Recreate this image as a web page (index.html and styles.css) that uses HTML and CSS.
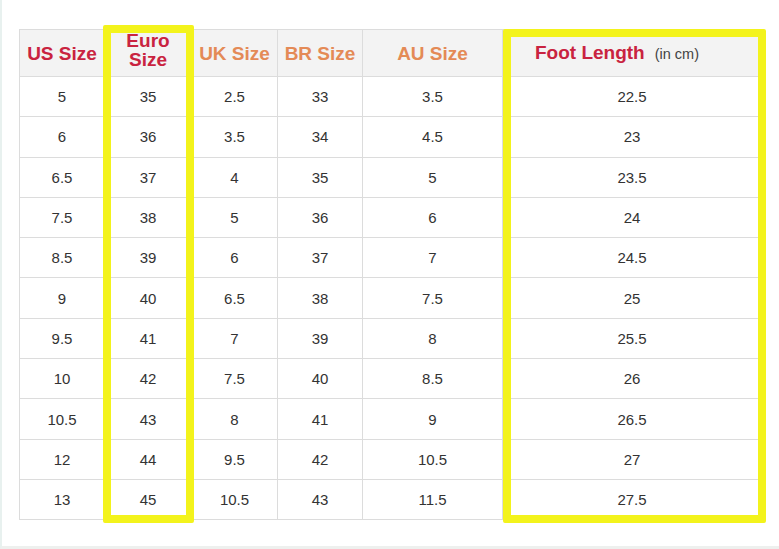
FILE: index.html
```html
<!DOCTYPE html>
<html>
<head>
<meta charset="utf-8">
<link rel="stylesheet" href="styles.css">
</head>
<body>
<div class="page">
  <div class="frame">
    <table class="chart">
      <colgroup>
        <col class="c-us"><col class="c-eu"><col class="c-uk"><col class="c-br"><col class="c-au"><col class="c-ft">
      </colgroup>
      <thead>
        <tr>
          <th class="red">US Size</th>
          <th class="red euro">Euro<br>Size</th>
          <th class="orange">UK Size</th>
          <th class="orange">BR Size</th>
          <th class="orange">AU Size</th>
          <th class="foot"><span class="red">Foot Length</span><span class="unit">(in cm)</span></th>
        </tr>
      </thead>
      <tbody>
        <tr><td>5</td><td>35</td><td>2.5</td><td>33</td><td>3.5</td><td>22.5</td></tr>
        <tr><td>6</td><td>36</td><td>3.5</td><td>34</td><td>4.5</td><td>23</td></tr>
        <tr><td>6.5</td><td>37</td><td>4</td><td>35</td><td>5</td><td>23.5</td></tr>
        <tr><td>7.5</td><td>38</td><td>5</td><td>36</td><td>6</td><td>24</td></tr>
        <tr><td>8.5</td><td>39</td><td>6</td><td>37</td><td>7</td><td>24.5</td></tr>
        <tr><td>9</td><td>40</td><td>6.5</td><td>38</td><td>7.5</td><td>25</td></tr>
        <tr><td>9.5</td><td>41</td><td>7</td><td>39</td><td>8</td><td>25.5</td></tr>
        <tr><td>10</td><td>42</td><td>7.5</td><td>40</td><td>8.5</td><td>26</td></tr>
        <tr><td>10.5</td><td>43</td><td>8</td><td>41</td><td>9</td><td>26.5</td></tr>
        <tr><td>12</td><td>44</td><td>9.5</td><td>42</td><td>10.5</td><td>27</td></tr>
        <tr><td>13</td><td>45</td><td>10.5</td><td>43</td><td>11.5</td><td>27.5</td></tr>
      </tbody>
    </table>
    <div class="hl hl-euro"></div>
    <div class="hl hl-foot"></div>
  </div>
</div>
</body>
</html>
```

FILE: styles.css
```css
html, body {
  margin: 0;
  padding: 0;
  background: #ffffff;
}
body {
  width: 779px;
  height: 549px;
  overflow: hidden;
  font-family: "Liberation Sans", Arial, sans-serif;
}
.page {
  box-sizing: border-box;
  width: 779px;
  height: 549px;
  padding: 29px 0 0 17px;
  border-left: 2px solid #e8f1ef;
  border-bottom: 3px solid #eef0ee;
}
.frame {
  position: relative;
  width: 742px;
}
.chart {
  border-collapse: collapse;
  table-layout: fixed;
  width: 742px;
}
.c-us { width: 85px; }
.c-eu { width: 87px; }
.c-uk { width: 86px; }
.c-br { width: 85px; }
.c-au { width: 140px; }
.c-ft { width: 259px; }
.chart th, .chart td {
  border: 1px solid #dcdcdc;
  text-align: center;
  padding: 0;
}
.chart th {
  height: 46px;
  background: #f3f3f3;
  font-size: 19px;
  font-weight: bold;
  line-height: 19px;
}
.chart td {
  height: 39.3px;
  font-size: 15px;
  color: #333333;
}
.red { color: #c92340; }
.orange { color: #e48a56; }
.chart th.euro {
  height: 40px;
  padding-bottom: 6px;
  line-height: 19px;
}
.chart th.foot {
  padding-right: 30px;
}
.unit {
  font-weight: normal;
  font-size: 14.5px;
  color: #444444;
  margin-left: 10px;
}
.hl {
  position: absolute;
  border: 8px solid #f3f31c;
  box-sizing: border-box;
  border-radius: 2px;
}
.hl-euro {
  left: 84px;
  top: -4px;
  width: 91px;
  height: 498px;
}
.hl-foot {
  left: 484px;
  top: 0;
  width: 263px;
  height: 494px;
}
```
